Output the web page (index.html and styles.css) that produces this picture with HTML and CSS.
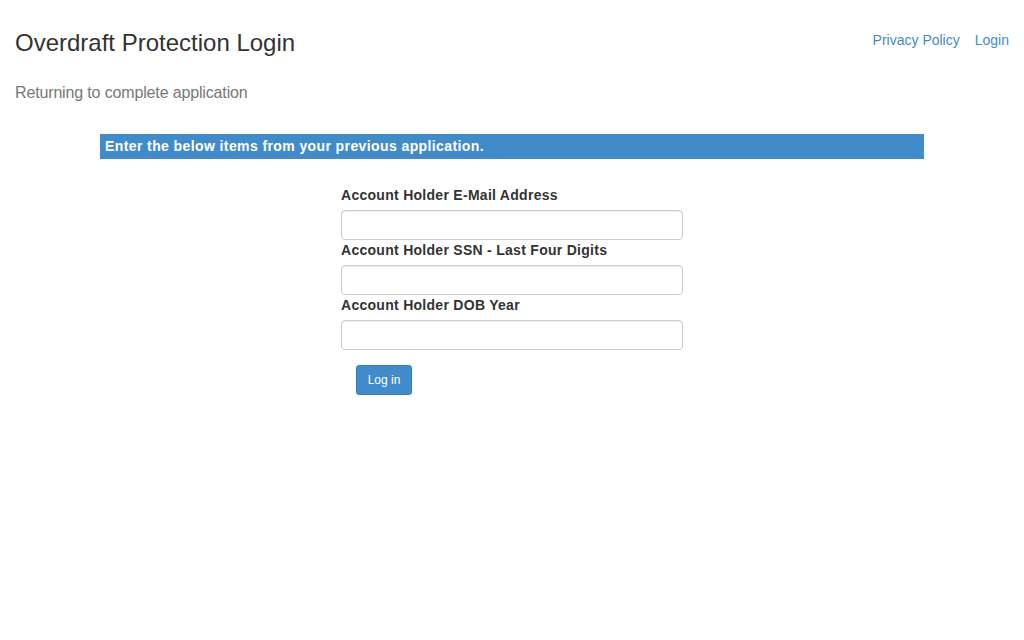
FILE: index.html
```html
<!DOCTYPE html>
<html lang="en">
<head>
    <meta charset="UTF-8">
    <meta name="viewport" content="width=device-width, initial-scale=1.0">
    <title>Overdraft Protection Login</title>
    <link rel="stylesheet" href="styles.css">
</head>
<body>
    <header class="page-header">
        <h1 class="page-title">Overdraft Protection Login</h1>
        <nav class="top-links">
            <a href="#">Privacy Policy</a>
            <a href="#">Login</a>
        </nav>
    </header>

    <p class="subtitle">Returning to complete application</p>

    <section class="login-section">
        <div class="section-banner">Enter the below items from your previous application.</div>

        <form class="login-form" onsubmit="return false;">
            <label for="email">Account Holder E-Mail Address</label>
            <input type="text" id="email" name="email">

            <label for="ssn">Account Holder SSN - Last Four Digits</label>
            <input type="text" id="ssn" name="ssn">

            <label for="dobYear">Account Holder DOB Year</label>
            <input type="text" id="dobYear" name="dobYear">

            <button type="submit">Log in</button>
        </form>
    </section>
</body>
</html>
```

FILE: styles.css
```css
/* General Reset */
* { margin: 0; padding: 0; box-sizing: border-box; }
body { font-family: "Liberation Sans", Arial, sans-serif; font-size: 14px; line-height: 20px; color: #333; background: #fff; }
a { color: #428bca; text-decoration: none; }
a:hover { text-decoration: underline; }

.page-header { display: flex; justify-content: space-between; align-items: flex-start; padding: 0 15px; }
.page-title { font-size: 24px; font-weight: normal; line-height: 28px; margin-top: 29px; }
.top-links { display: flex; gap: 15px; margin-top: 30px; }

.subtitle { font-size: 16px; color: #777; padding: 0 15px; margin-top: 26px; letter-spacing: -0.15px; }

.login-section { width: 824px; margin: 31px auto 0; }
.section-banner { background-color: #428bca; color: #fff; font-weight: bold; height: 25px; line-height: 25px; padding: 0 5px; letter-spacing: 0.4px; }

.login-form { width: 342px; margin: 26px auto 0; display: flex; flex-direction: column; align-items: flex-start; }
.login-form label { font-weight: bold; margin-bottom: 5px; letter-spacing: 0.28px; }
.login-form input { width: 100%; height: 30px; border: 1px solid #ccc; border-radius: 4px; padding: 5px 10px; font-size: 12px; box-shadow: inset 0 1px 1px rgba(0,0,0,.075); }
.login-form button { margin: 15px 0 0 15px; width: 56px; height: 30px; padding: 5px 0; font-size: 12px; font-family: inherit; color: #fff; background-color: #428bca; border: 1px solid #357ebd; border-radius: 3px; cursor: pointer; }
.login-form button:hover { background-color: #3071a9; }
```
